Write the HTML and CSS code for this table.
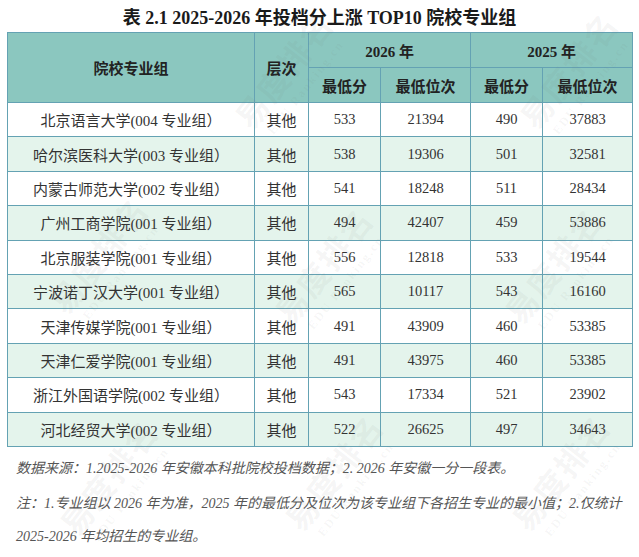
FILE: index.html
```html
<!DOCTYPE html>
<html lang="zh-CN">
<head>
<meta charset="utf-8">
<title>表 2.1 2025-2026 年投档分上涨TOP10院校专业组</title>
<link rel="stylesheet" href="styles.css">
</head>
<body>
<div class="page">
  <h1 class="title">表 2.1 2025-2026 年投档分上涨 TOP10 院校专业组</h1>
  <table class="rank">
    <colgroup>
      <col class="c-name"><col class="c-level"><col class="c-score"><col class="c-pos"><col class="c-score2"><col class="c-pos">
    </colgroup>
    <thead>
      <tr class="h1">
        <th rowspan="2">院校专业组</th>
        <th rowspan="2">层次</th>
        <th colspan="2">2026 年</th>
        <th colspan="2">2025 年</th>
      </tr>
      <tr class="h2">
        <th>最低分</th><th>最低位次</th><th>最低分</th><th>最低位次</th>
      </tr>
    </thead>
    <tbody>
      <tr><td>北京语言大学(004 专业组）</td><td>其他</td><td>533</td><td>21394</td><td>490</td><td>37883</td></tr>
      <tr><td>哈尔滨医科大学(003 专业组）</td><td>其他</td><td>538</td><td>19306</td><td>501</td><td>32581</td></tr>
      <tr><td>内蒙古师范大学(002 专业组）</td><td>其他</td><td>541</td><td>18248</td><td>511</td><td>28434</td></tr>
      <tr><td>广州工商学院(001 专业组）</td><td>其他</td><td>494</td><td>42407</td><td>459</td><td>53886</td></tr>
      <tr><td>北京服装学院(001 专业组）</td><td>其他</td><td>556</td><td>12818</td><td>533</td><td>19544</td></tr>
      <tr><td>宁波诺丁汉大学(001 专业组）</td><td>其他</td><td>565</td><td>10117</td><td>543</td><td>16160</td></tr>
      <tr><td>天津传媒学院(001 专业组）</td><td>其他</td><td>491</td><td>43909</td><td>460</td><td>53385</td></tr>
      <tr><td>天津仁爱学院(001 专业组）</td><td>其他</td><td>491</td><td>43975</td><td>460</td><td>53385</td></tr>
      <tr><td>浙江外国语学院(002 专业组）</td><td>其他</td><td>543</td><td>17334</td><td>521</td><td>23902</td></tr>
      <tr><td>河北经贸大学(002 专业组）</td><td>其他</td><td>522</td><td>26625</td><td>497</td><td>34643</td></tr>
    </tbody>
  </table>
  <div class="notes">
    <p>数据来源：1.2025-2026 年安徽本科批院校投档数据；2. 2026 年安徽一分一段表。</p>
    <p>注：1.专业组以 2026 年为准，2025 年的最低分及位次为该专业组下各招生专业的最小值；2.仅统计 2025-2026 年均招生的专业组。</p>
  </div>

  <div class="wm wm-1"><span class="wm-big">易度排名</span><span class="wm-small">EDU Ranking.cn</span></div>
  <div class="wm wm-2"><span class="wm-big">易度排名</span><span class="wm-small">EDU Ranking.cn</span></div>
  <div class="wm wm-3"><span class="wm-big">易度排名</span><span class="wm-small">EDU Ranking.cn</span></div>
  <div class="wm wm-4"><span class="wm-big">易度排名</span><span class="wm-small">EDU Ranking.cn</span></div>
  <div class="wm wm-5"><span class="wm-big">易度排名</span><span class="wm-small">EDU Ranking.cn</span></div>
  <div class="wm wm-6"><span class="wm-big">易度排名</span><span class="wm-small">EDU Ranking.cn</span></div>
  <div class="wm wm-7"><span class="wm-big">易度排名</span><span class="wm-small">EDU Ranking.cn</span></div>
  <div class="wm wm-8"><span class="wm-big">易度排名</span><span class="wm-small">EDU Ranking.cn</span></div>
</div>
</body>
</html>
```
FILE: styles.css
```css
html, body {
  margin: 0;
  padding: 0;
  background: #ffffff;
}

.page {
  position: relative;
  width: 639px;
  height: 557px;
  overflow: hidden;
  font-family: "Liberation Serif", "Noto Sans CJK SC", serif;
  color: #333333;
}

.title {
  margin: 0;
  padding-top: 4px;
  height: 28px;
  line-height: 28px;
  font-size: 18px;
  font-weight: 700;
  color: #1a1a1a;
  text-align: center;
  position: relative;
  z-index: 2;
}

.rank {
  position: relative;
  z-index: 1;
  margin-left: 7px;
  width: 626px;
  border-collapse: collapse;
  table-layout: fixed;
}

.c-name { width: 247px; }
.c-level { width: 54px; }
.c-score { width: 72px; }
.c-pos { width: 90px; }
.c-score2 { width: 72px; }

.rank th,
.rank td {
  border: 1px solid #64a2b3;
  text-align: center;
  padding: 0;
}

.rank th {
  background: #8bc7bf;
  font-size: 15px;
  font-weight: 700;
  color: #222222;
}

.rank .h1 th,
.rank .h2 th {
  height: 34px;
}

.rank td {
  font-size: 15px;
  height: 33.4px;
  color: #333333;
}

.rank td:nth-child(n+3) {
  font-size: 14.5px;
}

.rank tbody tr:nth-child(even) td {
  background: #e4f4ec;
}

.notes {
  position: relative;
  z-index: 2;
  margin-top: 5px;
  padding-left: 16px;
  width: 617px;
  font-size: 14px;
  font-style: italic;
  color: #555555;
  line-height: 33px;
}

.notes p {
  margin: 0 0 2px 0;
}

.wm {
  position: absolute;
  z-index: 3;
  width: 150px;
  height: 60px;
  display: flex;
  flex-direction: column;
  align-items: center;
  transform: rotate(-52deg);
  pointer-events: none;
  color: rgba(120, 120, 120, 0.07);
  font-family: "Noto Sans CJK SC", sans-serif;
  white-space: nowrap;
}

.wm-big {
  font-size: 32px;
  font-weight: 700;
  line-height: 42px;
  letter-spacing: 2px;
}

.wm-small {
  font-family: "Liberation Serif", serif;
  font-size: 12px;
  font-weight: 700;
  letter-spacing: 2px;
  line-height: 16px;
}

.wm-1 { left: 215px; top: 45px; }
.wm-2 { left: 500px; top: 45px; }
.wm-3 { left: 30px; top: 230px; }
.wm-4 { left: 255px; top: 240px; }
.wm-5 { left: 485px; top: 240px; }
.wm-6 { left: 40px; top: 452px; }
.wm-7 { left: 265px; top: 447px; }
.wm-8 { left: 492px; top: 447px; }
```
